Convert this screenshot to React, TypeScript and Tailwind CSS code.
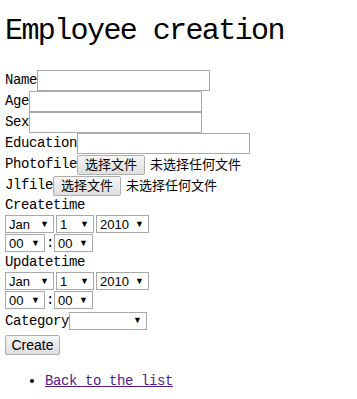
const mono = "font-['Liberation_Mono',monospace] text-[14px] tracking-[-0.4px]";
const ui = "font-['Liberation_Sans','Noto_Sans_CJK_SC',sans-serif] text-[13px]";

function TextField({ label }: { label: string }) {
  return (
    <div className="flex h-[21px] items-center">
      <span className={mono}>{label}</span>
      <input className="h-[21px] w-[173px] border border-[#a9a9a9] bg-white outline-none" />
    </div>
  );
}

function FileField({ label }: { label: string }) {
  return (
    <div className="flex h-[21px] items-center">
      <span className={mono}>{label}</span>
      <button className={`${ui} h-[20px] w-[68px] rounded-[2px] border border-[#adadad] bg-gradient-to-b from-[#f6f6f6] to-[#dedede] leading-none text-black`}>
        选择文件
      </button>
      <span className={`${ui} ml-[5px] text-black`}>未选择任何文件</span>
    </div>
  );
}

function Select({ value, w }: { value: string; w: string }) {
  return (
    <div className={`${ui} ${w} flex h-[18px] items-center justify-between border border-[#a9a9a9] bg-white pl-[3px] pr-[4px] leading-none`}>
      <span>{value}</span>
      <span className="text-[9px]">▼</span>
    </div>
  );
}

function DateTime({ label }: { label: string }) {
  return (
    <div>
      <div className={`${mono} flex h-[19px] items-center`}>{label}</div>
      <div className="flex h-[19px] items-start gap-[2px]">
        <Select value="Jan" w="w-[49px]" />
        <Select value="1" w="w-[38px]" />
        <Select value="2010" w="w-[53px]" />
      </div>
      <div className="flex h-[19px] items-start">
        <Select value="00" w="w-[40px]" />
        <span className={`${mono} mx-[1px] w-[7px] text-center leading-[18px]`}>:</span>
        <Select value="00" w="w-[39px]" />
      </div>
    </div>
  );
}

export default function App() {
  return (
    <div className="min-h-[399px] bg-white px-[5px] text-black">
      <h1 className="h-[70px] pt-[14px] font-['Liberation_Mono',monospace] text-[30px] leading-[34px] tracking-[-1.6px]">
        Employee creation
      </h1>
      <form>
        <TextField label="Name" />
        <TextField label="Age" />
        <TextField label="Sex" />
        <TextField label="Education" />
        <FileField label="Photofile" />
        <FileField label="Jlfile" />
        <DateTime label="Createtime" />
        <DateTime label="Updatetime" />
        <div className="flex h-[22px] items-center">
          <span className={mono}>Category</span>
          <div className={`${ui} flex h-[18px] w-[78px] items-center justify-end border border-[#a9a9a9] bg-white pr-[4px]`}>
            <span className="text-[9px]">▼</span>
          </div>
        </div>
        <button className={`${ui} h-[20px] w-[55px] rounded-[2px] border border-[#adadad] bg-gradient-to-b from-[#f6f6f6] to-[#dedede] text-[14px] leading-none`}>
          Create
        </button>
      </form>
      <ul className="mt-[16px] list-disc pl-[40px]">
        <li className={`${mono} leading-[19px]`}>
          <a href="#" className="text-[#551a8b] underline">Back to the list</a>
        </li>
      </ul>
    </div>
  );
}
